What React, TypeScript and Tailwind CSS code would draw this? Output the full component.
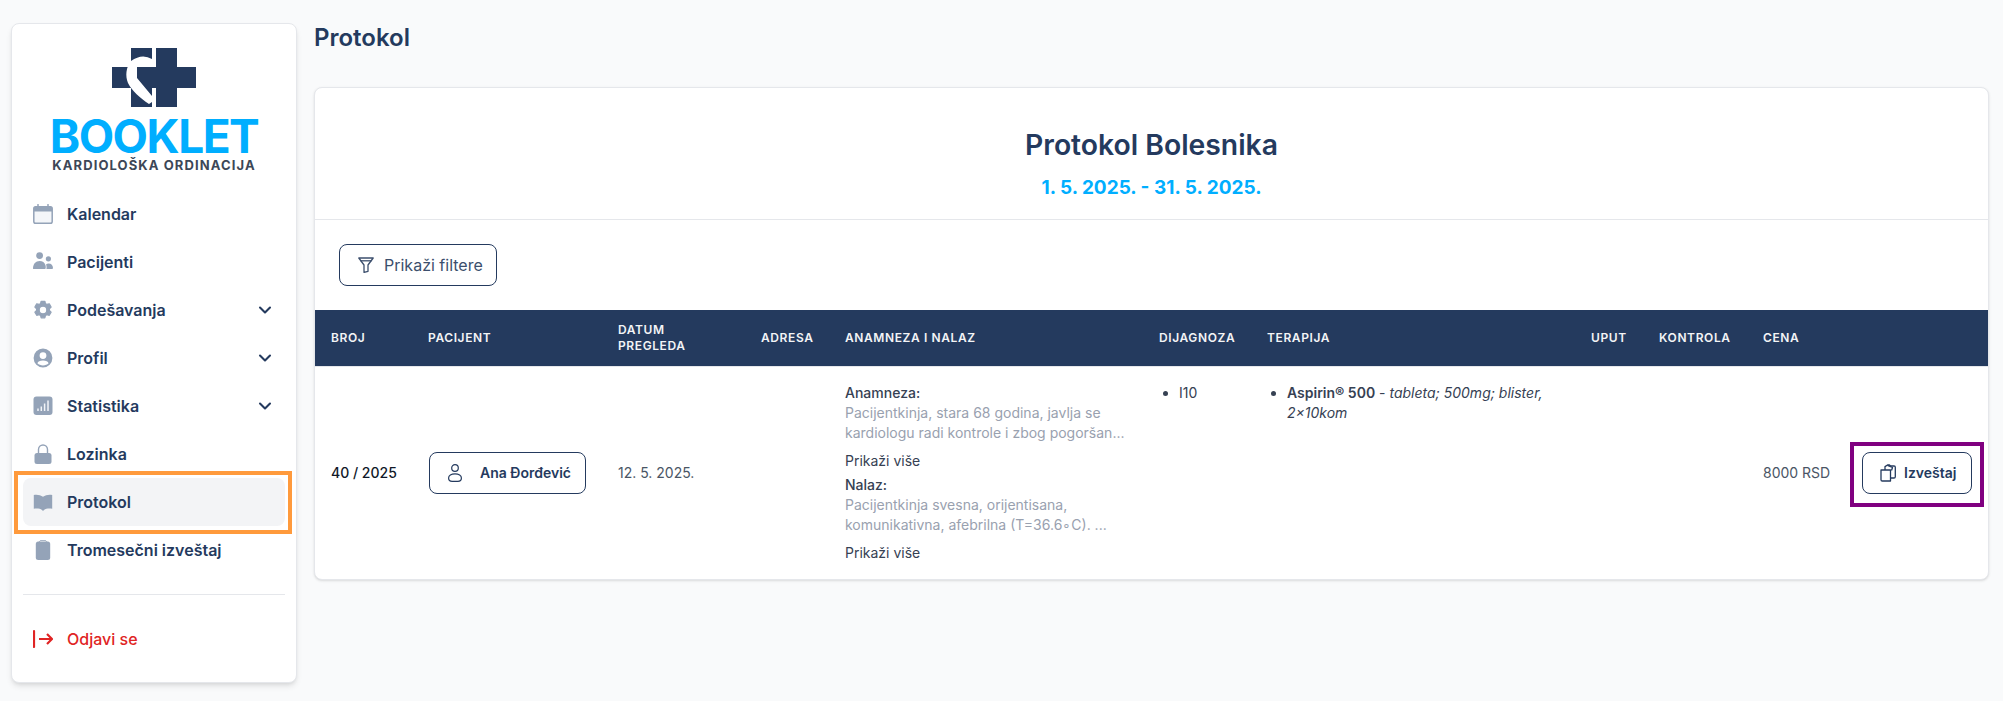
import { ChevronDown } from 'lucide-react';

const iconClass = 'w-[20px] h-[20px] shrink-0 text-[#94a3b8]';

function CalendarIcon() {
  return (
    <svg viewBox="0 0 20 20" className={iconClass}>
      <rect x="0.800" y="2.800" width="18.400" height="16.400" rx="1.800" fill="#f4f6f9" stroke="currentColor" strokeWidth="1.500" />
      <path d="M1 4.600a2 2 0 0 1 2-2h14a2 2 0 0 1 2 2V7.500H1z" fill="currentColor" />
      <path d="M5 0.600v3M15 0.600v3" stroke="currentColor" strokeWidth="1.500" strokeLinecap="round" />
    </svg>
  );
}

function UsersIcon() {
  return (
    <svg viewBox="0 0 20 20" className={iconClass} fill="currentColor">
      <circle cx="6.600" cy="3.600" r="3.400" />
      <circle cx="15.400" cy="6.800" r="2.600" />
      <path d="M0 16.400C0 12 2.800 9 6.600 9c3 0 5 1.600 5.900 4.200.4 1.200.4 3.800-.5 3.800H1c-.6 0-1-.2-1-.6z" />
      <path d="M13.400 17h5.200c.8 0 1.400-.4 1.400-1 0-2.500-1.800-4.400-4.400-4.400-1 0-1.900.2-2.600.8.6 1.200.8 3 .4 4.600z" />
    </svg>
  );
}

function CogIcon() {
  return (
    <svg viewBox="-1 -1 22 22" className={iconClass} fill="currentColor" stroke="currentColor" strokeWidth="1.400" strokeLinejoin="round">
      <path
        fillRule="evenodd"
        d="M8 .4h4l.7 2.600 1.600.9 2.600-.7 2 3.500-1.900 1.900v1.800l1.900 1.900-2 3.500-2.600-.7-1.600.9-.7 2.600H8l-.7-2.600-1.600-.9-2.600.7-2-3.500 1.900-1.900V8.600L1.100 6.700l2-3.500 2.600.7 1.600-.9zM10 5.800a4.200 4.200 0 1 0 0 8.400 4.200 4.200 0 0 0 0-8.400z"
      />
    </svg>
  );
}

function ProfileIcon() {
  return (
    <svg viewBox="0 0 20 20" className={iconClass} fill="currentColor">
      <path
        fillRule="evenodd"
        d="M10 .6a9.400 9.400 0 1 0 0 18.800A9.400 9.400 0 0 0 10 .6zm0 3.600a3.400 3.400 0 1 1 0 6.800 3.400 3.400 0 0 1 0-6.800zM4.400 15.200c.6-1.800 2.400-2.800 5.600-2.800s5 1 5.600 2.800c-1.400 1.400-3.400 2.200-5.600 2.200s-4.200-.8-5.600-2.200z"
      />
    </svg>
  );
}

function ChartIcon() {
  return (
    <svg viewBox="0 0 20 20" className={iconClass}>
      <rect x="0.500" y="0.500" width="19" height="18.500" rx="3" fill="currentColor" />
      <path d="M5 15v-2.500M8.300 15v-4.500M11.600 15V7.500M15 15V4.500" stroke="#f1f3f7" strokeWidth="1.500" />
    </svg>
  );
}

function LockIcon() {
  return (
    <svg viewBox="0 0 20 20" className={iconClass} fill="currentColor">
      <path d="M5.500 10V5.500a4.500 4.500 0 0 1 9 0V10" fill="none" stroke="currentColor" strokeWidth="1.400" />
      <rect x="1.500" y="9" width="17" height="11" rx="2.500" />
    </svg>
  );
}

function BookIcon() {
  return (
    <svg viewBox="0 0 20 20" className={iconClass} fill="currentColor">
      <path d="M.8 3C3.500 2.300 7.500 2.800 10 4.800 12.500 2.800 16.500 2.300 19.200 3v13.800c-3-.6-6.400-.2-8.200 1.200l-1 .9-1-.9C7.200 16.600 3.800 16.200.8 16.800z" />
    </svg>
  );
}

function ClipboardIcon() {
  return (
    <svg viewBox="0 0 20 20" className={iconClass} fill="currentColor">
      <rect x="2.800" y="1.500" width="14.400" height="18.500" rx="2.500" />
      <path d="M6.500 2.200C6.500 .9 7.300.4 8 .4h4c.7 0 1.500.5 1.500 1.800" fill="none" stroke="#94a3b8" strokeWidth="0.900" />
    </svg>
  );
}

function LogoutIcon() {
  return (
    <svg viewBox="0 0 20 20" className="w-[20px] h-[20px] shrink-0 text-[#e02424]" fill="none" stroke="currentColor" strokeWidth="2.200">
      <path d="M1 2v16" strokeLinecap="round" />
      <path d="M6 10h12.500M14 5l5 5-5 5" strokeLinejoin="round" />
    </svg>
  );
}

function FilterIcon() {
  return (
    <svg viewBox="0 0 16 16" className="w-[16px] h-[16px] shrink-0" fill="none" stroke="currentColor" strokeWidth="1.300" strokeLinejoin="round">
      <path d="M.8 1h14.400L10 8v6.300L6 15.400V8z" />
      <path d="M2.500 3.800h11" />
    </svg>
  );
}

function PersonIcon() {
  return (
    <svg viewBox="0 0 14 18" className="w-[14px] h-[18px] shrink-0" fill="none" stroke="currentColor" strokeWidth="1.200">
      <circle cx="7" cy="4" r="3.300" />
      <path d="M7 9.800c-3.800 0-6.400 1.800-6.400 4.200 0 2 1.700 3.300 3.500 3.300h5.800c1.800 0 3.500-1.300 3.500-3.300 0-2.400-2.600-4.200-6.400-4.200z" />
    </svg>
  );
}

function ReportIcon() {
  return (
    <svg viewBox="0 0 16 18" className="w-[16px] h-[18px] shrink-0" fill="none" stroke="currentColor" strokeWidth="1.300" strokeLinejoin="round">
      <path d="M1 6h9.500v11H2.300A1.300 1.300 0 0 1 1 15.700z" />
      <path d="M5 6V2.600L7.500 1h2l1 1h3.500a1.300 1.300 0 0 1 1.300 1.300v9.400a1.300 1.300 0 0 1-1.300 1.300h-3.500" />
      <path d="M7.500 1.400 12.500 3.500l-1 3" />
    </svg>
  );
}

function Logo() {
  return (
    <div className="flex flex-col items-center h-[166px] pt-[24px]">
      <svg viewBox="0 0 84 59" className="w-[84px] h-[59px] shrink-0">
        <path d="M19 0h21v59H19zM44 0h21v19h19v21H65v19H44zM0 19h44v21H0z" fill="#243a5e" />
        <path d="M40 0h4v19h-4zM40 40h4v19h-4z" fill="#fff" />
        <path d="M19 13Q30 5 40 11h4v8H25v11l15 18v6l-3 2C28 50 20 43 16 35 13 28 14 19 19 13z" fill="#fff" />
      </svg>
      <div className="mt-[7px] text-[46px] leading-[44px] font-bold tracking-[-1.500px] text-[#00aeff]">BOOKLET</div>
      <div className="text-[13px] leading-[14px] font-bold tracking-[1.100px] text-[#3c4757]">KARDIOLOŠKA ORDINACIJA</div>
    </div>
  );
}

function NavRow({ icon, label, chevron, active }: { icon: React.ReactNode; label: string; chevron?: boolean; active?: boolean }) {
  return (
    <div className={`relative flex items-center h-12 rounded-lg pl-[10px] pr-[10px] gap-[14px] text-base font-semibold text-[#243a5e] ${active ? 'bg-gray-100' : ''}`}>
      {icon}
      <span className="flex-1">{label}</span>
      {chevron && <ChevronDown className="w-[20px] h-[20px] text-[#243a5e]" strokeWidth={2.500} />}
      {active && <div className="absolute left-[-9px] right-[-7px] top-[-7px] bottom-[-8px] border-4 border-[#ff9a3c] pointer-events-none" />}
    </div>
  );
}

function Sidebar() {
  return (
    <aside className="w-[286px] h-[660px] mt-[23px] ml-[11px] shrink-0 bg-white border border-gray-200 rounded-lg shadow-md px-[11px]">
      <Logo />
      <nav>
        <NavRow icon={<CalendarIcon />} label="Kalendar" />
        <NavRow icon={<UsersIcon />} label="Pacijenti" />
        <NavRow icon={<CogIcon />} label="Podešavanja" chevron />
        <NavRow icon={<ProfileIcon />} label="Profil" chevron />
        <NavRow icon={<ChartIcon />} label="Statistika" chevron />
        <NavRow icon={<LockIcon />} label="Lozinka" />
        <NavRow icon={<BookIcon />} label="Protokol" active />
        <NavRow icon={<ClipboardIcon />} label="Tromesečni izveštaj" />
      </nav>
      <div className="mt-5 border-t border-gray-200" />
      <div className="mt-5 flex items-center h-12 pl-[10px] gap-[14px] text-base font-medium text-[#e02424]">
        <LogoutIcon />
        <span>Odjavi se</span>
      </div>
    </aside>
  );
}

const headers = ['Broj', 'Pacijent', 'Datum pregleda', 'Adresa', 'Anamneza i nalaz', 'Dijagnoza', 'Terapija', 'Uput', 'Kontrola', 'Cena', ''];

function Table() {
  return (
    <table className="w-full table-fixed text-sm text-left">
      <colgroup>
        <col className="w-[97px]" />
        <col className="w-[190px]" />
        <col className="w-[143px]" />
        <col className="w-[84px]" />
        <col className="w-[314px]" />
        <col className="w-[108px]" />
        <col className="w-[324px]" />
        <col className="w-[68px]" />
        <col className="w-[104px]" />
        <col className="w-[99px]" />
        <col className="w-[142px]" />
      </colgroup>
      <thead className="bg-[#243a5e] text-xs uppercase text-gray-100">
        <tr>
          {headers.map((h, i) => (
            <th key={i} className="px-4 py-3 font-semibold tracking-[0.05em] leading-4">{h}</th>
          ))}
        </tr>
      </thead>
      <tbody className="border-t border-gray-200 text-gray-600">
        <tr>
          <td className="px-4 py-4 font-medium text-gray-900 whitespace-nowrap">40 / 2025</td>
          <td className="px-4 py-4">
            <button className="flex items-center gap-[18px] h-[42px] w-[157px] ml-px pl-[18px] border border-[#243a5e] rounded-lg font-semibold text-[#243a5e] whitespace-nowrap">
              <PersonIcon />
              Ana Đorđević
            </button>
          </td>
          <td className="px-4 py-4">12. 5. 2025.</td>
          <td className="px-4 py-4" />
          <td className="px-4 py-4 align-top">
            <p className="font-medium text-gray-700">Anamneza:</p>
            <p className="text-gray-400">
              Pacijentkinja, stara 68 godina, javlja se kardiologu radi kontrole i zbog pogoršan...
            </p>
            <button className="block mt-2 text-gray-700">Prikaži više</button>
            <p className="mt-1 font-medium text-gray-700">Nalaz:</p>
            <p className="text-gray-400">
              Pacijentkinja svesna, orijentisana, komunikativna, afebrilna (T=36.6∘C). ...
            </p>
            <button className="block mt-2 text-gray-700">Prikaži više</button>
          </td>
          <td className="px-4 py-4 align-top">
            <ul className="list-disc pl-[20px] text-gray-700">
              <li>I10</li>
            </ul>
          </td>
          <td className="px-4 py-4 align-top">
            <ul className="list-disc pl-[20px] text-gray-700">
              <li>
                <span className="font-semibold">Aspirin® 500</span> - <em>tableta; 500mg; blister, 2×10kom</em>
              </li>
            </ul>
          </td>
          <td className="px-4 py-4" />
          <td className="px-4 py-4" />
          <td className="px-4 py-4 whitespace-nowrap">8000 RSD</td>
          <td className="px-4 py-4">
            <div className="relative">
              <button className="flex items-center gap-[8px] h-[42px] w-[110px] pl-[17px] border border-[#243a5e] rounded-lg font-semibold text-[#243a5e]">
                <ReportIcon />
                Izveštaj
              </button>
              <div className="absolute left-[-12px] top-[-10px] w-[134px] h-[65px] border-4 border-[#800080] pointer-events-none" />
            </div>
          </td>
        </tr>
      </tbody>
    </table>
  );
}

export default function App() {
  return (
    <div className="flex min-h-screen bg-[#f9fafb] font-['Inter',sans-serif] text-[#243a5e]">
      <Sidebar />
      <main className="flex-1 min-w-0 ml-[17px] pr-[14px] pt-[20px]">
        <h1 className="text-2xl leading-9 font-semibold">Protokol</h1>
        <section className="mt-[31px] bg-white border border-gray-200 rounded-lg shadow-sm overflow-hidden">
          <header className="pt-[39px] pb-[17px] border-b border-gray-200 text-center">
            <h2 className="text-[28.300px] leading-9 font-semibold">Protokol Bolesnika</h2>
            <p className="mt-[11px] text-[19px] leading-7 font-bold text-[#00aeff]">1. 5. 2025. - 31. 5. 2025.</p>
          </header>
          <div className="pt-[24px] pb-6 pl-[24px]">
            <button className="flex items-center gap-[10px] h-[42px] w-[158px] px-[18px] border border-[#243a5e] rounded-lg text-base text-[#3c4f6d] whitespace-nowrap">
              <FilterIcon />
              Prikaži filtere
            </button>
          </div>
          <Table />
        </section>
      </main>
    </div>
  );
}
